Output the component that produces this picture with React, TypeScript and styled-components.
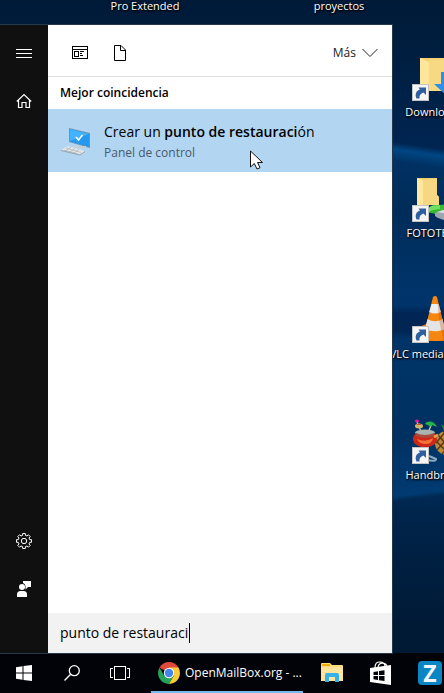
import React from "react";
import styled, { createGlobalStyle } from "styled-components";

const GlobalStyle = createGlobalStyle`
  * { box-sizing: border-box; }
  html, body { margin: 0; padding: 0; overflow: hidden; }
  body { font-family: "Open Sans", "Noto Sans", sans-serif; background: #001b38; }
  button, input { font-family: inherit; }
`;

const Desktop = styled.div`
  display: flex;
  flex-direction: column;
  height: 100vh;
  overflow: hidden;
  background: linear-gradient(180deg, #001a38 0%, #001f40 8%, #002450 20%, #002b58 29%, #00346a 42%, #003365 55%, #003060 66%, #002348 76%, #001a36 90%, #001a36 100%);
`;

const TopLabels = styled.div`
  display: grid;
  grid-template-columns: 194px 194px;
  justify-content: start;
  padding-left: 48px;
  height: 25px;
  flex: none;
`;

const DesktopLabel = styled.span`
  font-size: 11px;
  line-height: 16px;
  color: #fff;
  text-align: center;
  white-space: nowrap;
  text-shadow: 1px 1px 2px #000, 0 1px 2px #000;
`;

const TopLabel = styled(DesktopLabel)`
  line-height: 12px;
`;

const Middle = styled.div`
  flex: 1;
  min-height: 0;
  display: flex;
`;

const Menu = styled.main`
  flex: 1;
  min-width: 0;
  display: flex;
  position: relative;
  box-shadow: 0 0 0 1px #25384c;
`;

const Rail = styled.nav`
  flex: none;
  width: 48px;
  background: #101010;
  display: flex;
  flex-direction: column;
  padding: 4px 0 40px;
`;

const RailButton = styled.button`
  width: 48px;
  height: 48px;
  border: 0;
  padding: 0;
  background: transparent;
  color: #fff;
  display: grid;
  place-items: center;
`;

const Spacer = styled.div`
  flex: 1;
`;

const Panel = styled.section`
  flex: 1;
  min-width: 0;
  background: #fff;
  color: #000;
  display: flex;
  flex-direction: column;
`;

const Filters = styled.div`
  height: 52px;
  flex: none;
  display: flex;
  align-items: center;
  gap: 16px;
  padding: 4px 14px 0 20px;
  border-bottom: 1px solid #dedede;
`;

const FilterButton = styled.button`
  width: 24px;
  height: 24px;
  border: 0;
  padding: 0;
  background: transparent;
  color: #000;
  display: grid;
  place-items: center;
`;

const MoreButton = styled.button`
  display: flex;
  align-items: center;
  gap: 6px;
  border: 0;
  padding: 0;
  background: transparent;
  color: #222;
  font-size: 12px;
  line-height: 20px;
`;

const Heading = styled.h2`
  margin: 0;
  padding: 0 12px;
  height: 32px;
  flex: none;
  font-size: 12px;
  line-height: 32px;
  font-weight: 600;
`;

const Result = styled.button`
  position: relative;
  flex: none;
  display: flex;
  align-items: center;
  gap: 12px;
  height: 63px;
  padding: 2px 12px 0;
  border: 0;
  background: #b2d6f2;
  text-align: left;
`;

const ResultText = styled.span`
  display: flex;
  flex-direction: column;
`;

const ResultTitle = styled.span`
  font-size: 14px;
  line-height: 22px;
  color: #000;
  white-space: nowrap;
  b { font-weight: 600; }
`;

const ResultSub = styled.span`
  font-size: 12px;
  line-height: 20px;
  color: #48596a;
`;

const Cursor = styled.svg`
  position: absolute;
  left: 202px;
  top: 41px;
`;

const SearchRow = styled.label`
  flex: none;
  display: flex;
  align-items: center;
  gap: 1px;
  height: 40px;
  padding: 0 12px;
  background: #f2f2f2;
`;

const SearchInput = styled.input`
  field-sizing: content;
  border: 0;
  outline: 0;
  padding: 0;
  background: transparent;
  color: #000;
  font-size: 14px;
  line-height: 20px;
`;

const Caret = styled.span`
  width: 1px;
  height: 20px;
  background: #000;
`;

const Shortcuts = styled.aside`
  flex: none;
  width: 52px;
  overflow: hidden;
  padding-top: 29px;
  background:
    linear-gradient(188deg, transparent 123px, rgba(0, 110, 190, 0.45) 130px, rgba(0, 90, 160, 0.2) 142px, transparent 190px),
    linear-gradient(180deg, transparent 280px, rgba(0, 20, 60, 0.45) 288px, rgba(0, 20, 60, 0.45) 306px, transparent 314px),
    linear-gradient(173deg, transparent 410px, rgba(0, 80, 150, 0.45) 468px, transparent 473px);
`;

const Shortcut = styled.a`
  width: 84px;
  height: 121px;
  display: flex;
  flex-direction: column;
  align-items: center;
  gap: 2px;
  text-decoration: none;
`;

const Taskbar = styled.footer`
  flex: none;
  height: 40px;
  background: #020308;
  display: flex;
  overflow: hidden;
`;

const TaskButton = styled.button`
  flex: none;
  width: 48px;
  border: 0;
  padding: 0;
  background: transparent;
  color: #fff;
  display: grid;
  place-items: center;
`;

const WindowButton = styled.button`
  flex: none;
  width: 152px;
  margin: 0 5px 0 7px;
  padding: 2px 0 0 7px;
  border: 0;
  border-bottom: 2px solid #76b9ed;
  background: transparent;
  color: #fff;
  display: flex;
  align-items: center;
  gap: 5px;
  font-size: 12px;
  line-height: 16px;
  white-space: nowrap;
`;

const Pinned = styled.div`
  display: flex;
  gap: 1px;
`;

const ShortcutBadge = () => (
  <g>
    <rect x="2.5" y="30.5" width="16" height="16" fill="#f5f5f5" stroke="#c4c4c4" />
    <path d="M6.500 44.500C4.500 40 6.500 36.500 10 35.500L8.500 33.500H16V41L13.500 38.500C10.500 39.500 9 41.500 9.500 44.500z" fill="#2f5f9f" />
  </g>
);

const DownloadsArt = () => (
  <svg width="48" height="48" viewBox="0 0 48 48" aria-hidden="true">
    <path d="M10 4h38v33H10z" fill="#f3d174" />
    <path d="M10 4l9 4v27l-9 3z" fill="#ffe69a" />
    <path d="M19 6h29v31H19z" fill="#f6d982" />
    <path d="M31 18h10v11h7L36 41 24 30h7z" fill="#2d8fe8" />
    <ShortcutBadge />
  </svg>
);

const FolderArt = () => (
  <svg width="48" height="48" viewBox="0 0 48 48" aria-hidden="true">
    <path d="M7 3h20v17l2 2v8H7z" fill="#f2cd6d" />
    <path d="M7 3l6 2v25H7z" fill="#ffe79e" />
    <path d="M13 5l14-2v17l2 2v8H13z" fill="#f6d883" />
    <path d="M18 34c4-6 8-3 12-4l18-2v7l-18 4c-5 1-8-2-12-1z" fill="#37b734" />
    <path d="M18 34c4-5 7-3 12-4v4c-5 1-8 0-12 4z" fill="#72df63" />
    <path d="M25 38l8-3 15 3v6c-8 3-18 1-23-3z" fill="#9da5ae" />
    <path d="M27 37l6-2 15 3v3z" fill="#d9dde0" />
    <ShortcutBadge />
  </svg>
);

const ConeArt = () => (
  <svg width="48" height="48" viewBox="0 0 48 48" aria-hidden="true">
    <path d="M9 31l7-3h18l10 3 3 14H12z" fill="#e36c07" />
    <path d="M23 1q2-2 4 0l10 41c-7 4-17 4-24 0z" fill="#f58710" />
    <path d="M21.500 8h7l2.300 8c-4 2-8 2-11.600 0z" fill="#ededed" />
    <path d="M17.500 23c5 3 10 3 15 0l2.500 10c-6 3-14 3-20 0z" fill="#e4e4e4" />
    <path d="M27 1l10 41-4 2-4-21z" fill="#c04d00" opacity=".3" />
    <ShortcutBadge />
  </svg>
);

const CocktailArt = () => (
  <svg width="48" height="48" viewBox="0 0 48 48" aria-hidden="true">
    <circle cx="37" cy="26" r="12" fill="#bb8a3c" />
    <path d="M28 18l16 18M26 24l13 13M33 14l14 16M43 15L27 33M47 20L32 37M36 14L26 26" stroke="#5a3a16" strokeWidth="1.500" />
    <path d="M34 14l-3-7 3 2 1-8 4 7 5-4-2 10z" fill="#218137" />
    <path d="M7 5l5 12M22 6l-4 10" stroke="#dec99b" strokeWidth="1.300" />
    <ellipse cx="7" cy="4" rx="2" ry="1.500" fill="#e715a9" />
    <ellipse cx="9" cy="9" rx="4" ry="2.500" fill="#d0b868" />
    <path d="M6 8q3-3 6 0z" fill="#d54a31" />
    <path d="M15 7c3-4 9-3 12 3l-5-2-2 2-2-2z" fill="#24b44a" />
    <path d="M16 29v12M17 43q9 2 9-1l-7-3" stroke="#8ea9bd" strokeWidth="2" fill="none" />
    <ellipse cx="15" cy="22" rx="12" ry="8.500" fill="#cf2818" />
    <ellipse cx="15" cy="15.500" rx="10" ry="3" fill="#a9b4ae" />
    <path d="M6 16q9 4 18 0v3q-9 4-18 0z" fill="#a94a3c" />
    <path d="M7 22q8 4 16-1-1 6-7 6-7 0-9-5z" fill="#f4733a" />
    <path d="M24 20l4-2" stroke="#e0a24a" strokeWidth="3" />
    <ShortcutBadge />
  </svg>
);

const shortcuts = [
  { name: "Downloads", art: <DownloadsArt /> },
  { name: "FOTOTECA", art: <FolderArt /> },
  { name: "VLC media player", art: <ConeArt /> },
  { name: "Handbrake", art: <CocktailArt /> },
];

const MenuIcon = () => (
  <svg width="16" height="16" viewBox="0 0 16 16" stroke="currentColor" shapeRendering="crispEdges">
    <path d="M0 4.500h16M0 8.500h16M0 12.500h16" />
  </svg>
);

const HomeIcon = () => (
  <svg width="16" height="16" viewBox="0 0 16 16" fill="none" stroke="currentColor" strokeWidth="1.200">
    <path d="M.8 8.500L8 1.500l7.200 7M2.500 7.300v7.200h3.500v-5h4v5h3.500V7.300" />
  </svg>
);

const teeth = Array.from({ length: 8 }, (_, i) => i * 45);
const gearPath = teeth
  .map((deg) => {
    const at = (r: number, a: number) => {
      const t = ((deg + a - 90) * Math.PI) / 180;
      return `${(8 + r * Math.cos(t)).toFixed(2)} ${(8 + r * Math.sin(t)).toFixed(2)}`;
    };
    return `${at(5.8, -14)}L${at(7.6, -10)}L${at(7.6, 10)}L${at(5.8, 14)}`;
  })
  .join("L");

const GearIcon = () => (
  <svg width="16" height="16" viewBox="0 0 16 16" fill="none" stroke="currentColor">
    <path d={`M${gearPath}Z`} strokeLinejoin="round" />
    <circle cx="8" cy="8" r="2.700" />
  </svg>
);

const FeedbackIcon = () => (
  <svg width="16" height="16" viewBox="0 0 16 16" fill="currentColor">
    <path d="M7 0h8v6h-3l-2.500 2.500V6A4 4 0 0 0 7 2z" />
    <circle cx="6" cy="6" r="3" />
    <path d="M1 16v-2.500Q1 10 4.500 10h3Q11 10 11 13.500V16z" />
  </svg>
);

const AppsIcon = () => (
  <svg width="16" height="14" viewBox="0 0 16 14" fill="none" stroke="currentColor" shapeRendering="crispEdges">
    <path d="M.5.5h15v12H.5zM.5 3.500h15M2.500 5.500h4v5h-4zM8 5.500h4M8 7.500h2M8 9.500h3" />
  </svg>
);

const DocumentIcon = () => (
  <svg width="12" height="16" viewBox="0 0 12 16" fill="none" stroke="currentColor">
    <path d="M.5.500h6.500l4.500 4.500v10.500H.5zM6.500.500v5h5" />
  </svg>
);

const ChevronIcon = () => (
  <svg width="16" height="10" viewBox="0 0 16 10" fill="none" stroke="currentColor">
    <path d="M.5 1L8 8.500 15.500 1" />
  </svg>
);

const ComputerIcon = () => (
  <svg width="32" height="32" viewBox="0 0 32 32" aria-hidden="true">
    <path d="M9 2l21 5v15L9 16z" fill="#6f93ab" />
    <path d="M10 3l19 5v13L10 15.500z" fill="#2399ef" />
    <path d="M10 3l19 5L10 15z" fill="#43b2ff" />
    <path d="M16 11l2.500 3 4-5" stroke="#fff" strokeWidth="1.600" fill="none" />
    <path d="M15 19l6 1.500 5-.5v1.500l-4 1.500-8-2z" fill="#c5ced3" />
    <path d="M1 24l7-4 17 5-5 3.500z" fill="#e3e6e7" />
    <path d="M4 24l14 4M6 22l15 4.500M5 25.500l6-4.500M9 26.500l6-4M13 27.500l6-4" stroke="#a3adb3" strokeWidth=".6" />
    <path d="M1 24v1l19 4.500 5-3.500v-1l-5 3.500z" fill="#98a3aa" />
  </svg>
);

const WindowsIcon = () => (
  <svg width="16" height="16" viewBox="0 0 16 16" fill="currentColor">
    <path d="M0 2.200L6.500 1.300v6.200H0zM7.500 1.100L16 0v7.500H7.500zM0 8.500h6.500v6.200L0 13.800zM7.500 8.500H16V16l-8.500-1.100z" />
  </svg>
);

const SearchIcon = () => (
  <svg width="16" height="16" viewBox="0 0 16 16" fill="none" stroke="currentColor" strokeWidth="1.300">
    <circle cx="10.300" cy="5.700" r="5" />
    <path d="M6.700 9.300L.5 15.500" />
  </svg>
);

const TaskViewIcon = () => (
  <svg width="20" height="14" viewBox="0 0 20 14" fill="none" stroke="currentColor" shapeRendering="crispEdges">
    <path d="M4.500.5h11v13h-11zM3 2.500H.5v9H3M17 2.500h2.500v9H17" />
  </svg>
);

const ChromeIcon = () => (
  <svg width="22" height="22" viewBox="0 0 22 22" aria-hidden="true">
    <path d="M11 11L1.500 5.500a11 11 0 0 1 19 0z" fill="#e04a3b" />
    <path d="M1.500 5.500a11 11 0 0 0 9.500 16.500l4.800-8.300L11 11 6.200 13.700z" fill="#25a35a" />
    <path d="M20.500 5.500A11 11 0 0 1 11 22l4.800-8.300L11 5.500z" fill="#fccc36" />
    <circle cx="11" cy="11" r="5.200" fill="#fff" />
    <circle cx="11" cy="11" r="4.200" fill="#4285ef" />
  </svg>
);

const ExplorerIcon = () => (
  <svg width="22" height="20" viewBox="0 0 22 20" aria-hidden="true">
    <path d="M0 1q0-1 1-1h8l2 2h10q1 0 1 1v15H0z" fill="#fddc7c" />
    <path d="M1 1h8v2H1z" fill="#f5a90b" />
    <path d="M0 4h22v14H0z" fill="#ffe59b" />
    <path d="M4 19v-7q0-2 2-2h10q2 0 2 2v7h-4v-5H8v5z" fill="#37b1e9" />
  </svg>
);

const StoreIcon = () => (
  <svg width="22" height="24" viewBox="0 0 22 24" aria-hidden="true">
    <path d="M5 7C5 2 7 1 10 1s5 2 5 5M8 6c1-5 7-5 9-1" stroke="#fff" fill="none" strokeWidth="1.200" />
    <path d="M0 7l21-3v20L0 21z" fill="#fff" />
    <path d="M3.500 11l4.500-.7v3.700H3.500zM9 10.100l5.500-.9v4.800H9zM3.500 15H8v4l-4.500-.7zM9 15h5.500v5L9 19.200z" fill="#020308" />
  </svg>
);

const ZBox = styled.span`
  width: 24px;
  height: 24px;
  border-radius: 4px;
  background: #0a86c5;
  color: #f1f7fb;
  font-size: 23px;
  line-height: 24px;
  font-weight: 700;
  text-align: center;
`;

export default function App() {
  return (
    <>
      <GlobalStyle />
      <Desktop>
        <TopLabels>
          <TopLabel>Pro Extended</TopLabel>
          <TopLabel>proyectos</TopLabel>
        </TopLabels>
        <Middle>
          <Menu>
            <Rail>
              <RailButton aria-label="Menú"><MenuIcon /></RailButton>
              <RailButton aria-label="Inicio"><HomeIcon /></RailButton>
              <Spacer />
              <RailButton aria-label="Configuración"><GearIcon /></RailButton>
              <RailButton aria-label="Comentarios"><FeedbackIcon /></RailButton>
            </Rail>
            <Panel>
              <Filters>
                <FilterButton aria-label="Aplicaciones"><AppsIcon /></FilterButton>
                <FilterButton aria-label="Documentos"><DocumentIcon /></FilterButton>
                <Spacer />
                <MoreButton>Más <ChevronIcon /></MoreButton>
              </Filters>
              <Heading>Mejor coincidencia</Heading>
              <Result>
                <ComputerIcon />
                <ResultText>
                  <ResultTitle>Crear un <b>punto de restauraci</b>ón</ResultTitle>
                  <ResultSub>Panel de control</ResultSub>
                </ResultText>
                <Cursor width="13" height="20" viewBox="0 0 13 20" aria-hidden="true">
                  <path d="M.5 1v16l3.800-3.500L7 19l3-1.300L7.500 12.500h5z" fill="#fff" stroke="#111" />
                </Cursor>
              </Result>
              <Spacer />
              <SearchRow>
                <SearchInput aria-label="Buscar" defaultValue="punto de restauraci" />
                <Caret />
              </SearchRow>
            </Panel>
          </Menu>
          <Shortcuts>
            {shortcuts.map((item) => (
              <Shortcut key={item.name} href="#">
                {item.art}
                <DesktopLabel>{item.name}</DesktopLabel>
              </Shortcut>
            ))}
          </Shortcuts>
        </Middle>
        <Taskbar>
          <TaskButton aria-label="Inicio"><WindowsIcon /></TaskButton>
          <TaskButton aria-label="Buscar"><SearchIcon /></TaskButton>
          <TaskButton aria-label="Vista de tareas"><TaskViewIcon /></TaskButton>
          <WindowButton><ChromeIcon />OpenMailBox.org - ...</WindowButton>
          <Pinned>
            <TaskButton aria-label="Explorador"><ExplorerIcon /></TaskButton>
            <TaskButton aria-label="Tienda"><StoreIcon /></TaskButton>
            <TaskButton><ZBox>Z</ZBox></TaskButton>
          </Pinned>
        </Taskbar>
      </Desktop>
    </>
  );
}
